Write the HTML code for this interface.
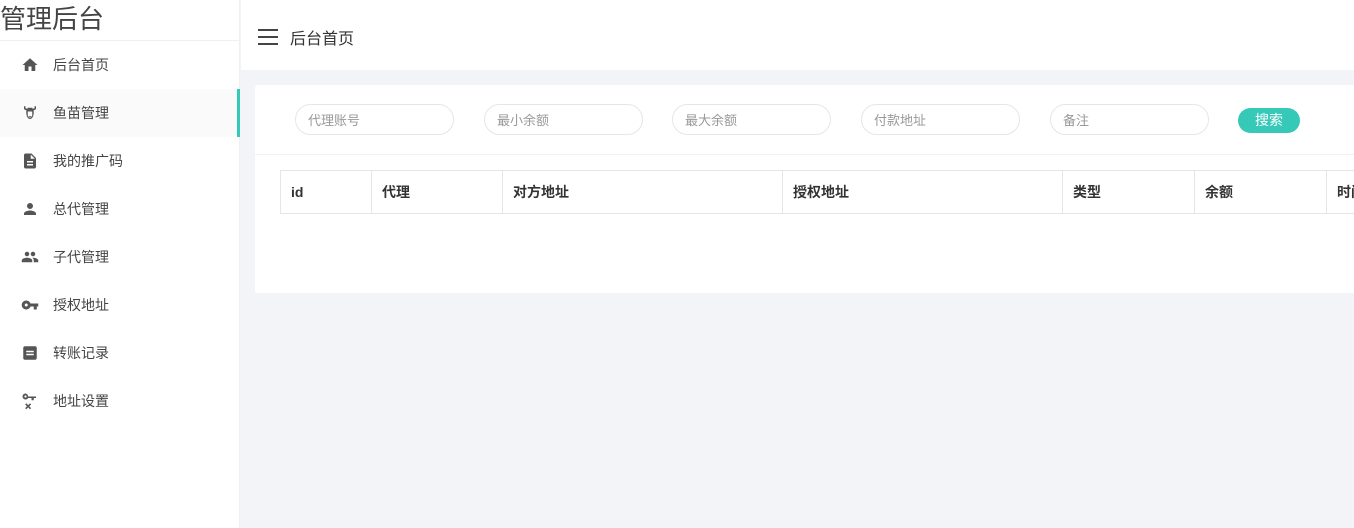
<!DOCTYPE html>
<html><head><meta charset="utf-8"><style>
*{margin:0;padding:0;box-sizing:border-box}
body{width:1354px;height:528px;overflow:hidden;background:#f3f4f8;font-family:"Liberation Sans","Noto Sans CJK SC",sans-serif;position:relative;color:#333}
.side{position:absolute;left:0;top:0;width:240px;height:528px;background:#fff;border-right:1px solid #eef0f4}
.title{height:41px;font-size:26px;line-height:38px;color:#444;border-bottom:1px solid #f0f0f0;white-space:nowrap}
.item{height:48px;display:flex;align-items:center;font-size:14px;color:#444;position:relative}
.item svg{position:absolute;left:21px;width:18px;height:18px;fill:#555}
.item span{position:absolute;left:53px}
.item.act{background:#fafafa}
.item.act:after{content:"";position:absolute;right:-1px;top:0;width:3px;height:48px;background:#36c9b8}
.top{position:absolute;left:241px;top:0;right:0;height:70px;background:#fff}
.top .ham{position:absolute;left:17px;top:29px;width:20px}
.top .ham i{display:block;height:2px;background:#444;margin-bottom:5px}
.top span{position:absolute;left:49px;top:25px;font-size:16px;color:#333}
.card{position:absolute;left:255px;top:85px;width:1110px;height:208px;background:#fff;border-radius:3px}
.inp{position:absolute;top:19px;width:159px;height:31px;border:1px solid #e6e6e6;border-radius:16px;font-size:13px;color:#999;padding:5px 0 0 12px}
.btn{position:absolute;left:983px;top:23px;width:62px;height:25px;border-radius:13px;background:#36c9b8;color:#fff;font-size:14px;text-align:center;line-height:25px}
.hr{position:absolute;left:0;right:0;top:69px;height:1px;background:#f2f2f2}
table{position:absolute;left:25px;top:85px;border-collapse:collapse;font-size:14px;font-weight:bold;color:#333;table-layout:fixed;width:1166px}
td{border:1px solid #e6e6e6;height:43px;padding-left:10px;white-space:nowrap;overflow:hidden}
</style></head><body>
<div class="side">
<div class="title">管理后台</div>
<div class="item"><svg viewBox="0 0 24 24"><path d="M10 20v-6h4v6h5v-8h3L12 3 2 12h3v8z"/></svg><span>后台首页</span></div>
<div class="item act"><svg viewBox="0 0 24 24"><path d="M4 3v3c0 1 1 2 2 2h1v3c0 5 2 9 5 9s5-4 5-9V8h1c1 0 2-1 2-2V3h-2v3h-3V5H9v1H6V3zm5 7h6v4c0 3-1 4-3 4s-3-1-3-4zm1 6h4v1h-4z"/></svg><span>鱼苗管理</span></div>
<div class="item"><svg viewBox="0 0 24 24"><path d="M14 2H6c-1 0-2 1-2 2v16c0 1 1 2 2 2h12c1 0 2-1 2-2V8zm2 16H8v-2h8zm0-4H8v-2h8zm-3-5V3.5L18.5 9z"/></svg><span>我的推广码</span></div>
<div class="item"><svg viewBox="0 0 24 24"><path d="M12 12a4 4 0 1 0 0-8 4 4 0 0 0 0 8zm0 2c-3 0-8 1.5-8 4v2h16v-2c0-2.5-5-4-8-4z"/></svg><span>总代管理</span></div>
<div class="item"><svg viewBox="0 0 24 24"><path d="M16 11a3 3 0 1 0 0-6 3 3 0 0 0 0 6zm-8 0a3 3 0 1 0 0-6 3 3 0 0 0 0 6zm0 2c-2.3 0-7 1.2-7 3.5V19h14v-2.5C15 14.2 10.3 13 8 13zm8 0h-1c1.2.8 2 2 2 3.5V19h6v-2.5c0-2.300-4.7-3.5-7-3.5z"/></svg><span>子代管理</span></div>
<div class="item"><svg viewBox="0 0 24 24"><path d="M12.6 10A6 6 0 1 0 12.6 14H17v4h4v-4h2v-4zM7 14a2 2 0 1 1 0-4 2 2 0 0 1 0 4z"/></svg><span>授权地址</span></div>
<div class="item"><svg viewBox="0 0 24 24"><path d="M19 3H5c-1 0-2 1-2 2v14c0 1 1 2 2 2h14c1 0 2-1 2-2V5c0-1-1-2-2-2zm-2 12H7v-2h10zm0-4H7V9h10z"/></svg><span>转账记录</span></div>
<div class="item"><svg viewBox="0 0 24 24"><path d="M6 2a4 4 0 1 0 3.5 6H14v3h3V8h3V6H9.5A4 4 0 0 0 6 2zm0 2.5a1.5 1.5 0 1 1 0 3 1.5 1.5 0 0 1 0-3zM7 15l-1.5 1.5L8 19l-2.5 2.5L7 23l2.5-2.5L12 23l1.5-1.5L11 19l2.5-2.5L12 15l-2.5 2.5z"/></svg><span>地址设置</span></div>
</div>
<div class="top"><div class="ham"><i></i><i></i><i></i></div><span>后台首页</span></div>
<div class="card">
<div class="inp" style="left:40px">代理账号</div>
<div class="inp" style="left:229px">最小余额</div>
<div class="inp" style="left:417px">最大余额</div>
<div class="inp" style="left:606px">付款地址</div>
<div class="inp" style="left:795px">备注</div>
<div class="btn">搜索</div>
<div class="hr"></div>
<table><colgroup><col style="width:91px"><col style="width:131px"><col style="width:280px"><col style="width:280px"><col style="width:132px"><col style="width:132px"><col style="width:120px"></colgroup><tr><td>id</td><td>代理</td><td>对方地址</td><td>授权地址</td><td>类型</td><td>余额</td><td>时间</td></tr></table>
</div>
</body></html>
